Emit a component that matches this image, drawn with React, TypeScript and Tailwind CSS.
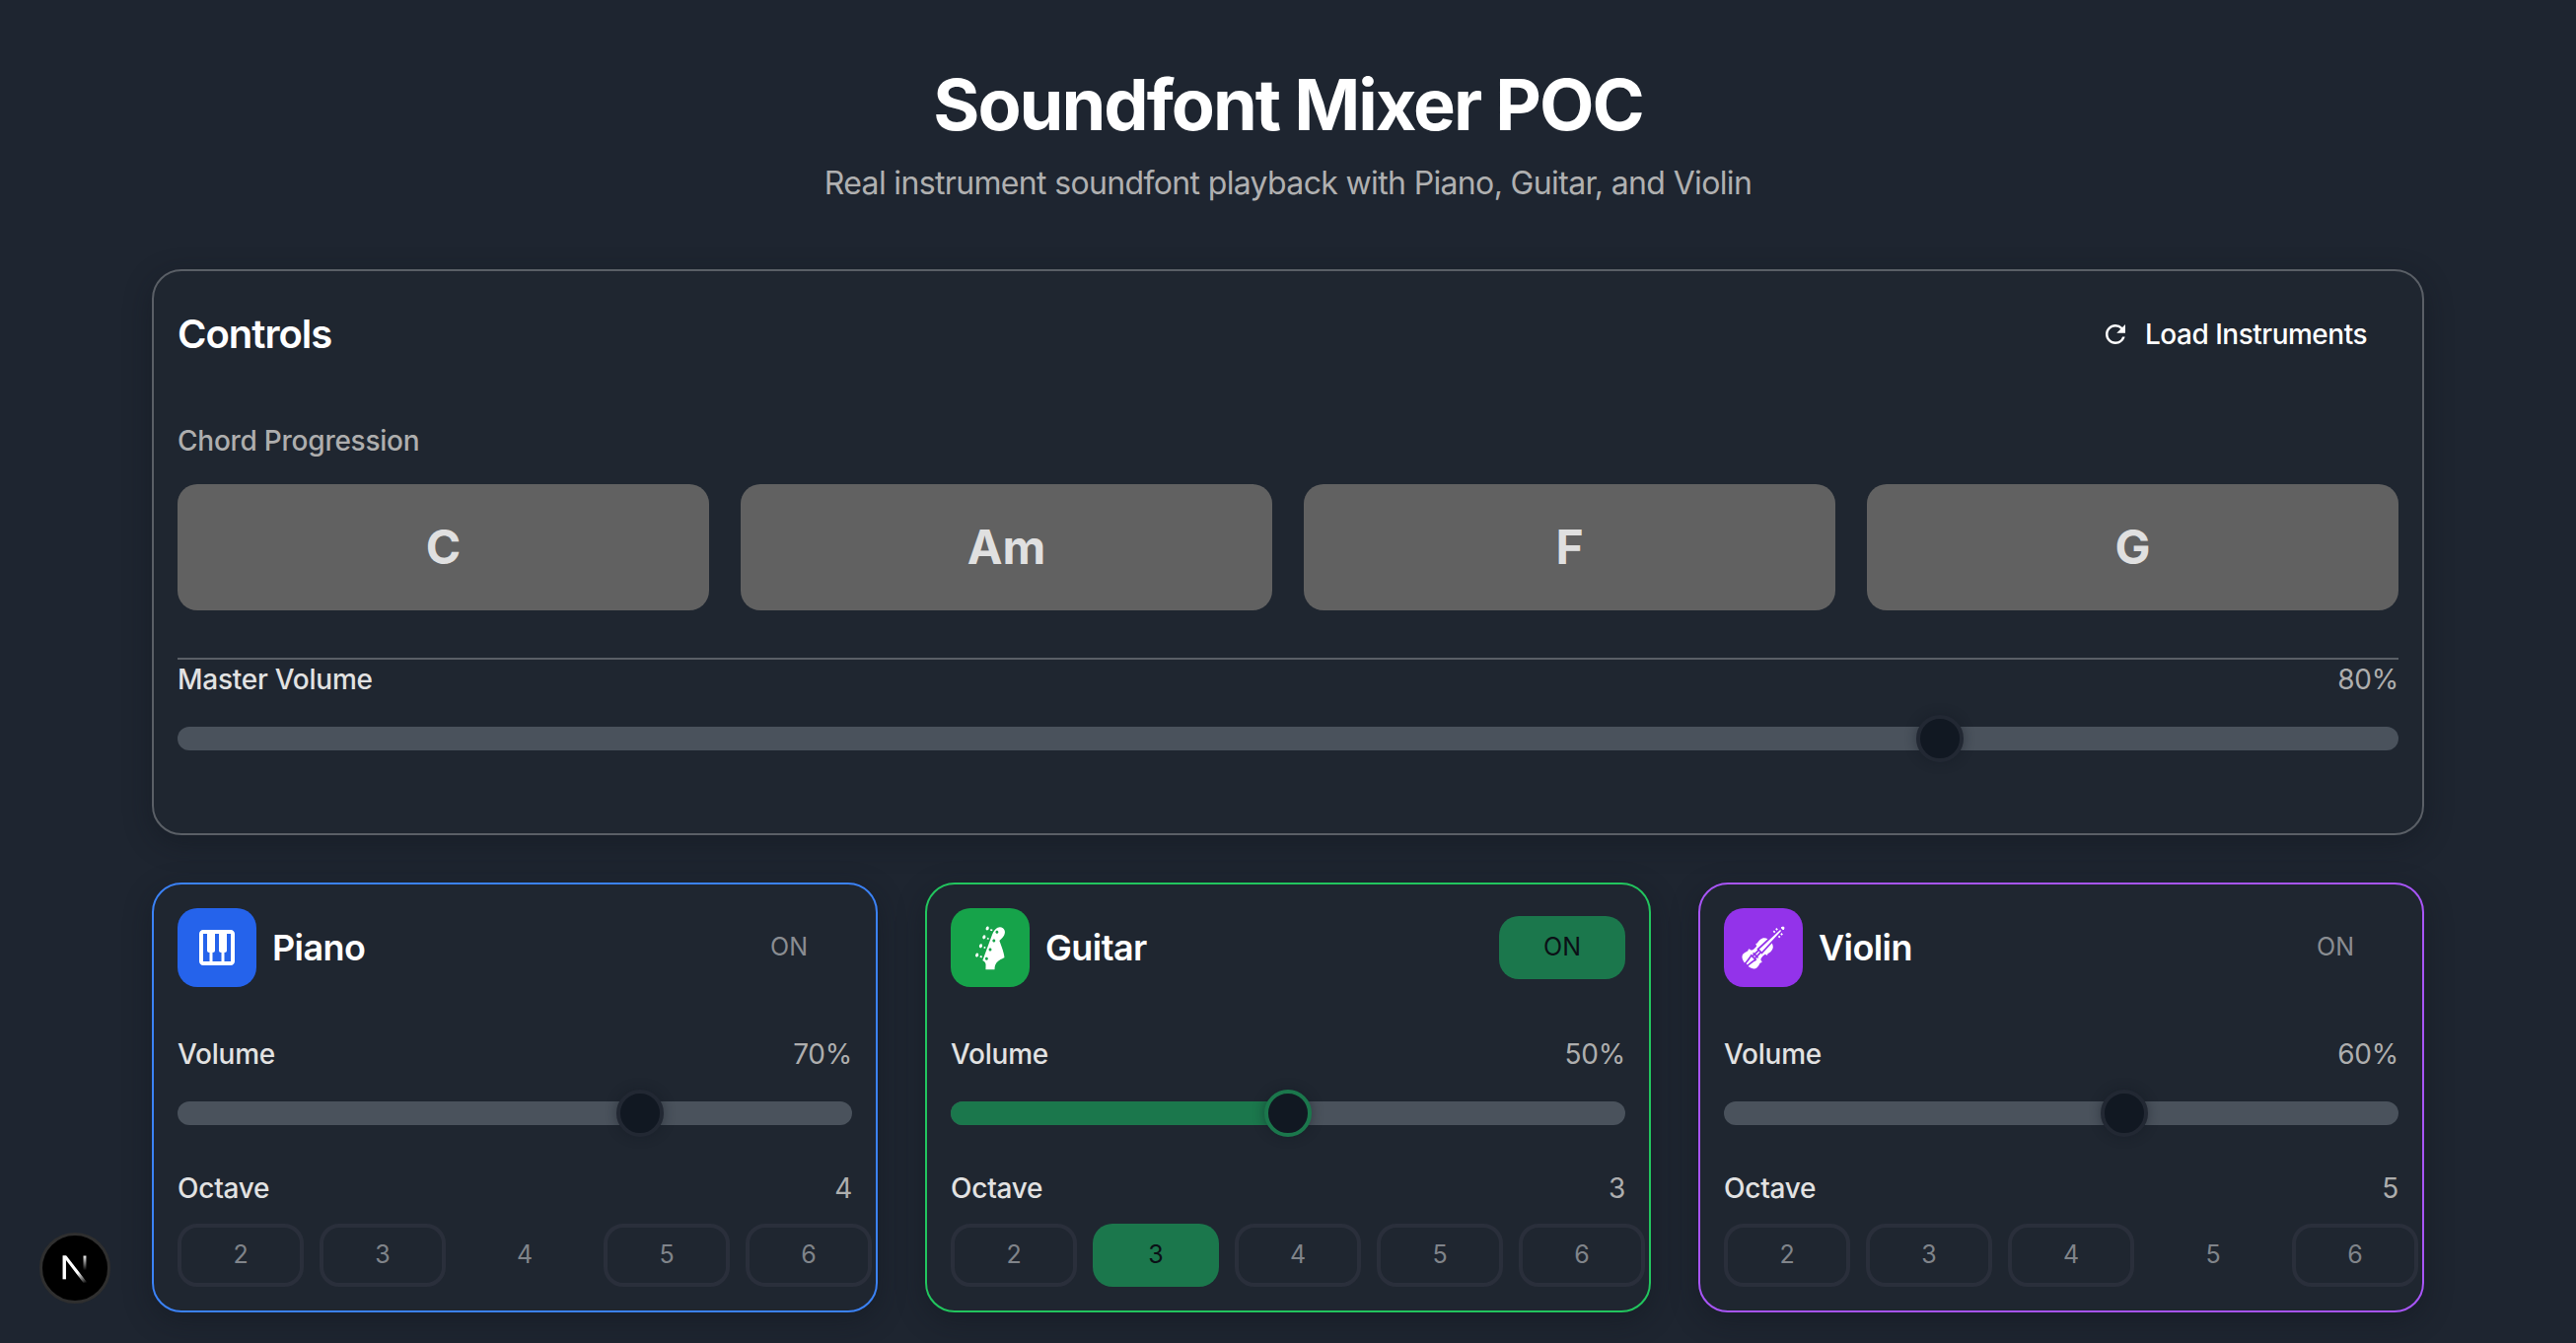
import { MdPiano, MdRefresh } from "react-icons/md";
import { GiGuitarBassHead, GiViolin } from "react-icons/gi";

const octaves = [2, 3, 4, 5, 6];

function Slider({ value, active }: { value: number; active?: boolean }) {
  // thumb centre travels inside the track, 24px in from each end
  const left = `calc(24px + (100% - 48px) * ${value / 100})`;
  return (
    <div className="relative h-6 rounded-xl bg-[#4a525c]">
      {active && (
        <div className="absolute inset-y-0 left-0 rounded-l-xl bg-[#1b774c]" style={{ width: left }} />
      )}
      <div
        className={`absolute top-1/2 h-12 w-12 -translate-x-1/2 -translate-y-1/2 rounded-full border-4 bg-[#111822] shadow-[0_0_12px_rgba(17,24,34,0.45)] ${
          active ? "border-[#1b774c]" : "border-[#222833]"
        }`}
        style={{ left }}
      />
    </div>
  );
}

function InstrumentCard({
  name,
  icon,
  border,
  iconBg,
  volume,
  octave,
  active,
}: {
  name: string;
  icon: React.ReactNode;
  border: string;
  iconBg: string;
  volume: number;
  octave: number;
  active?: boolean;
}) {
  return (
    <div className={`rounded-[30px] border-2 bg-[#1f2630] p-6 shadow-[0_8px_28px_rgba(15,20,28,0.4)] ${border}`}>
      <div className="flex items-center">
        <div className={`flex h-20 w-20 items-center justify-center rounded-[20px] text-white ${iconBg}`}>{icon}</div>
        <span className="ml-4 text-[36px] font-semibold tracking-[-0.6px] text-white">{name}</span>
        <button
          className={`ml-auto h-16 w-32 rounded-[20px] text-[25px] ${
            active ? "bg-[#1b774c] text-[#0b1016]" : "text-[#8a8d92]"
          }`}
        >
          ON
        </button>
      </div>

      <div className="mt-12 flex h-10 items-center justify-between text-[28px] leading-10 tracking-[-0.25px]">
        <span className="font-medium text-[#e2e2e2]">Volume</span>
        <span className="text-[#aeaeae]">{volume}%</span>
      </div>
      <div className="mt-7">
        <Slider value={volume} active={active} />
      </div>

      <div className="mt-11 flex h-10 items-center justify-between text-[28px] leading-10 tracking-[-0.25px]">
        <span className="font-medium text-[#e2e2e2]">Octave</span>
        <span className="text-[#aeaeae]">{octave}</span>
      </div>
      <div className="mt-4 flex gap-4">
        {octaves.map((o) => {
          const selected = o === octave;
          return (
            <button
              key={o}
              className={`h-16 w-32 shrink-0 rounded-[20px] text-[25px] ${
                selected
                  ? active
                    ? "bg-[#1b774c] text-[#0b1016]"
                    : "text-[#80848a]"
                  : "border-4 border-[#2a2f3b] text-[#80848a]"
              }`}
            >
              {o}
            </button>
          );
        })}
      </div>
    </div>
  );
}

export default function App() {
  return (
    <div className="relative min-h-screen overflow-hidden bg-[#1e2530] pt-[66px] font-['Inter',sans-serif]">
      <div className="mx-auto w-[2304px]">
        {/* header */}
        <h1 className="text-center text-[72px] font-bold leading-20 tracking-[-2px] text-white">Soundfont Mixer POC</h1>
        <p className="mt-5 mb-[67px] text-center text-[32px] leading-10 tracking-[-0.65px] text-[#b0b0b0]">
          Real instrument soundfont playback with Piano, Guitar, and Violin
        </p>

        {/* controls */}
        <div className="rounded-[30px] border-2 border-[#5a5f66] bg-[#1f2630] px-6 pt-6 pb-[84px] shadow-[0_8px_28px_rgba(15,20,28,0.4)]">
          <div className="flex h-20 items-center justify-between">
            <h2 className="text-[40px] font-semibold tracking-[-1px] text-white">Controls</h2>
            <button className="mr-8 flex items-center gap-[15px] text-[28px] font-medium tracking-[-0.5px] text-white">
              <MdRefresh size={30} />
              Load Instruments
            </button>
          </div>

          <div className="mt-12 text-[28px] font-medium leading-10 tracking-[-0.25px] text-[#aeaeae]">
            Chord Progression
          </div>
          <div className="mt-6 grid grid-cols-4 gap-8">
            {["C", "Am", "F", "G"].map((c) => (
              <button key={c} className="h-32 rounded-[20px] bg-[#616161] text-[48px] font-bold text-[#e0e0e0]">
                {c}
              </button>
            ))}
          </div>

          <div className="mt-12 border-t-2 border-[#5a5f66]">
            <div className="flex h-10 items-center justify-between text-[28px] leading-10 tracking-[-0.25px]">
              <span className="font-medium text-[#e2e2e2]">Master Volume</span>
              <span className="text-[#aeaeae]">80%</span>
            </div>
            <div className="mt-7">
              <Slider value={80} />
            </div>
          </div>
        </div>

        {/* instruments */}
        <div className="mt-12 grid grid-cols-3 gap-12">
          <InstrumentCard
            name="Piano"
            icon={<MdPiano size={48} />}
            border="border-[#3b82f6]"
            iconBg="bg-[#2563eb]"
            volume={70}
            octave={4}
          />
          <InstrumentCard
            name="Guitar"
            icon={<GiGuitarBassHead size={48} />}
            border="border-[#22c55e]"
            iconBg="bg-[#16a34a]"
            volume={50}
            octave={3}
            active
          />
          <InstrumentCard
            name="Violin"
            icon={<GiViolin size={48} />}
            border="border-[#a855f7]"
            iconBg="bg-[#9333ea]"
            volume={60}
            octave={5}
          />
        </div>
      </div>

      {/* next dev badge */}
      <div className="fixed bottom-10 left-10 flex h-[72px] w-[72px] items-center justify-center rounded-full border-[3px] border-[#2f2f2f] bg-black">
        <svg width="34" height="34" viewBox="0 0 30 30" fill="none">
          <defs>
            <linearGradient id="nDiag" x1="10" y1="6" x2="26" y2="28" gradientUnits="userSpaceOnUse">
              <stop offset="0.55" stopColor="#fff" />
              <stop offset="1" stopColor="#fff" stopOpacity="0" />
            </linearGradient>
            <linearGradient id="nBar" x1="23" y1="3" x2="23" y2="17" gradientUnits="userSpaceOnUse">
              <stop stopColor="#fff" />
              <stop offset="1" stopColor="#fff" stopOpacity="0" />
            </linearGradient>
          </defs>
          <path d="M4 4h3v21H4z" fill="#fff" />
          <path d="M4 4h3.4L26 28h-3.6z" fill="url(#nDiag)" />
          <path d="M22.5 4h2.6v14h-2.6z" fill="url(#nBar)" />
        </svg>
      </div>
    </div>
  );
}
